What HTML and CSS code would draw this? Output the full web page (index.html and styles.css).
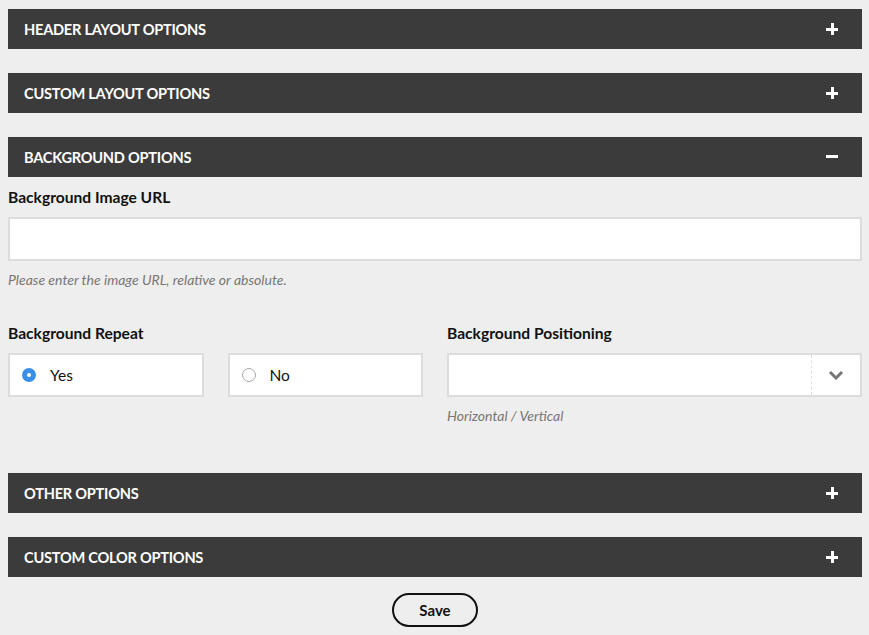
FILE: index.html
```html
<!DOCTYPE html>
<html>
<head>
<meta charset="utf-8">
<link rel="stylesheet" href="styles.css">
</head>
<body>
<div class="page">
  <div class="bar"><span class="bar-title">HEADER LAYOUT OPTIONS</span><span class="icon plus"></span></div>
  <div class="bar"><span class="bar-title">CUSTOM LAYOUT OPTIONS</span><span class="icon plus"></span></div>
  <div class="section">
    <div class="bar open"><span class="bar-title">BACKGROUND OPTIONS</span><span class="icon minus"></span></div>
    <div class="panel">
      <div class="label">Background Image URL</div>
      <div class="input"></div>
      <div class="hint">Please enter the image URL, relative or absolute.</div>
      <div class="row">
        <div class="col">
          <div class="label">Background Repeat</div>
          <div class="radios">
            <div class="radio"><span class="dot checked"></span><span>Yes</span></div>
            <div class="radio"><span class="dot"></span><span>No</span></div>
          </div>
        </div>
        <div class="col">
          <div class="label">Background Positioning</div>
          <div class="select">
            <div class="select-value"></div>
            <div class="select-arrow">
              <svg width="16" height="10" viewBox="0 0 16 10"><path d="M2 2 L8 8 L14 2" fill="none" stroke="#777" stroke-width="3"/></svg>
            </div>
          </div>
          <div class="hint">Horizontal / Vertical</div>
        </div>
      </div>
    </div>
  </div>
  <div class="bar"><span class="bar-title">OTHER OPTIONS</span><span class="icon plus"></span></div>
  <div class="bar"><span class="bar-title">CUSTOM COLOR OPTIONS</span><span class="icon plus"></span></div>
  <div class="actions"><button class="save">Save</button></div>
</div>
</body>
</html>
```

FILE: styles.css
```css
html, body {
  margin: 0;
  padding: 0;
  background: #eeeeee;
}
body {
  font-family: "Lato", "Open Sans", sans-serif;
  color: #111;
}
.page {
  padding: 9px 7px 0 8px;
  display: flex;
  flex-direction: column;
  gap: 24px;
}
.bar {
  height: 40px;
  background: #3b3b3b;
  display: flex;
  align-items: center;
  justify-content: space-between;
  padding: 0 24px 0 16px;
}
.bar-title {
  color: #fff;
  font-weight: 700;
  font-size: 14.6px;
  letter-spacing: -0.25px;
}
.icon {
  position: relative;
  width: 12px;
  height: 12px;
}
.icon::before, .icon::after {
  content: "";
  position: absolute;
  background: #fff;
}
.icon::before {
  left: 0;
  top: 5px;
  width: 12px;
  height: 3px;
}
.plus::after {
  left: 5px;
  top: 0;
  width: 3px;
  height: 12px;
}
.minus::after { display: none; }
.minus::before { top: 4px; }
.section {
  display: flex;
  flex-direction: column;
}
.panel {
  display: flex;
  flex-direction: column;
  padding-bottom: 25px;
}
.label {
  font-weight: 700;
  font-size: 15.6px;
  margin-top: 12px;
  height: 18px;
  line-height: 17px;
  margin-bottom: 10px;
}
.input {
  height: 40px;
  background: #fff;
  border: 2px solid #dcdcdc;
}
.hint {
  font-style: italic;
  color: #777;
  font-size: 14px;
  margin-top: 11px;
  height: 16px;
  line-height: 16px;
}
.row {
  display: grid;
  grid-template-columns: 415px 1fr;
  gap: 24px;
  margin-top: 25px;
}
.radios {
  display: grid;
  grid-template-columns: 1fr 1fr;
  gap: 24px;
}
.radio {
  height: 40px;
  background: #fff;
  border: 2px solid #dcdcdc;
  display: flex;
  align-items: center;
  gap: 14px;
  padding-left: 12px;
  font-size: 15.5px;
}
.dot {
  width: 14px;
  height: 14px;
  border: 1px solid #aaa;
  border-radius: 50%;
  background: #fff;
  box-sizing: border-box;
}
.dot.checked {
  border: 5px solid #3c8fe8;
}
.select {
  height: 40px;
  background: #fff;
  border: 2px solid #dcdcdc;
  display: flex;
}
.select-value { flex: 1; }
.select-arrow {
  width: 48px;
  border-left: 1px dashed #ddd;
  display: flex;
  align-items: center;
  justify-content: center;
}
.actions {
  display: flex;
  justify-content: center;
  margin-top: -8px;
}
.save {
  width: 86px;
  height: 34px;
  border: 2px solid #111;
  border-radius: 17px;
  background: transparent;
  font-family: "Lato", sans-serif;
  font-weight: 700;
  font-size: 15px;
  color: #111;
  padding: 0;
}
```
